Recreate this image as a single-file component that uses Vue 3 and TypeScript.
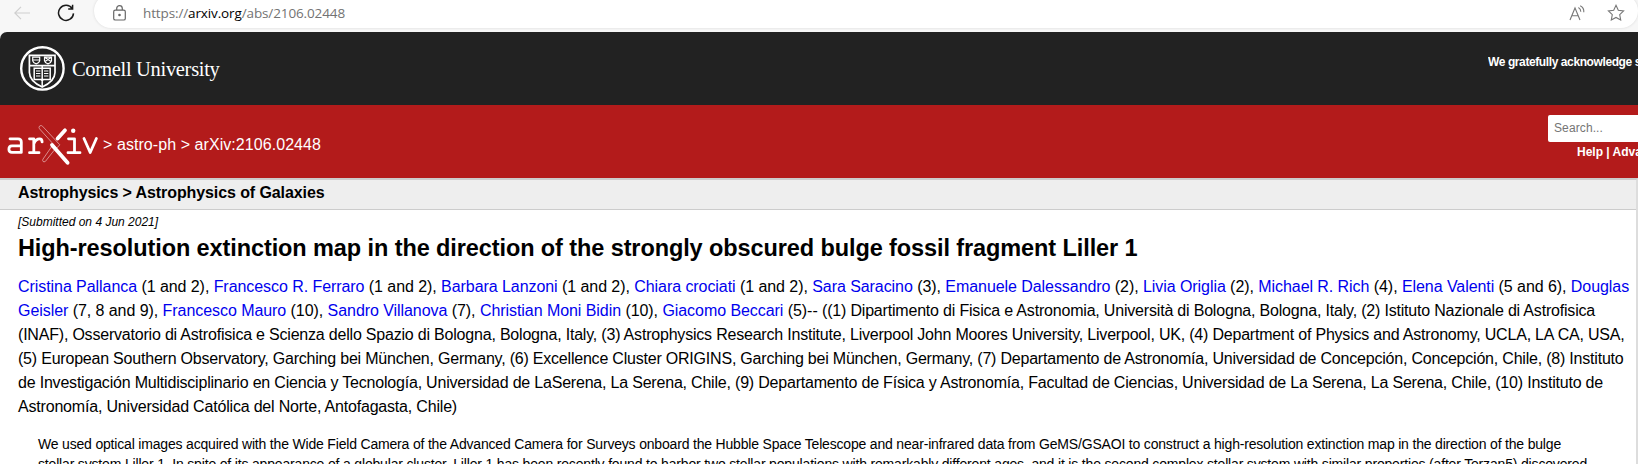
<script setup lang="ts">
interface Part {
  text: string
  link?: boolean
}
interface Run {
  parts: Part[]
  width: number
}

// Tracks a text so that it takes exactly the given width in pixels
const vFit = {
  mounted(el: HTMLElement, binding: { value: number }) {
    const count = (el.textContent ?? '').length
    const natural = el.getBoundingClientRect().width
    if (count > 0) el.style.letterSpacing = `${(binding.value - natural) / count}px`
  },
}

// "[Name]" marks a linked author
const run = (width: number, text: string): Run => ({
  width,
  parts: text
    .split(/(\[[^\]]+\])/)
    .filter(Boolean)
    .map((s) => (s.startsWith('[') ? { text: s.slice(1, -1), link: true } : { text: s })),
})

const authorLines: Run[][] = [
  [run(1611, '[Cristina Pallanca] (1 and 2), [Francesco R. Ferraro] (1 and 2), [Barbara Lanzoni] (1 and 2), [Chiara crociati] (1 and 2), [Sara Saracino] (3), [Emanuele Dalessandro] (2), [Livia Origlia] (2), [Michael R. Rich] (4), [Elena Valenti] (5 and 6), [Douglas]')],
  [
    run(804, '[Geisler] (7, 8 and 9), [Francesco Mauro] (10), [Sandro Villanova] (7), [Christian Moni Bidin] (10), [Giacomo Beccari] (5)-- '),
    run(773, '((1) Dipartimento di Fisica e Astronomia, Università di Bologna, Bologna, Italy, (2) Istituto Nazionale di Astrofisica'),
  ],
  [run(1606.5, '(INAF), Osservatorio di Astrofisica e Scienza dello Spazio di Bologna, Bologna, Italy, (3) Astrophysics Research Institute, Liverpool John Moores University, Liverpool, UK, (4) Department of Physics and Astronomy, UCLA, LA CA, USA,')],
  [run(1605.5, '(5) European Southern Observatory, Garching bei München, Germany, (6) Excellence Cluster ORIGINS, Garching bei München, Germany, (7) Departamento de Astronomía, Universidad de Concepción, Concepción, Chile, (8) Instituto')],
  [run(1585, 'de Investigación Multidisciplinario en Ciencia y Tecnología, Universidad de LaSerena, La Serena, Chile, (9) Departamento de Física y Astronomía, Facultad de Ciencias, Universidad de La Serena, La Serena, Chile, (10) Instituto de')],
  [run(439, 'Astronomía, Universidad Católica del Norte, Antofagasta, Chile)')],
]

const abstractLines: Run[] = [
  run(1523, 'We used optical images acquired with the Wide Field Camera of the Advanced Camera for Surveys onboard the Hubble Space Telescope and near-infrared data from GeMS/GSAOI to construct a high-resolution extinction map in the direction of the bulge'),
  run(1549, 'stellar system Liller 1. In spite of its appearance of a globular cluster, Liller 1 has been recently found to harbor two stellar populations with remarkably different ages, and it is the second complex stellar system with similar properties (after Terzan5) discovered'),
]
</script>

<template>
  <div class="window">
    <div class="toolbar">
      <svg class="back" width="16" height="14" viewBox="0 0 16 14"><path d="M16 7H1M7 .8.8 7 7 13.2" /></svg>
      <svg class="reload" width="18" height="18" viewBox="0 0 18 18"><path d="M15.2 4.6A7.5 7.5 0 1 0 16.5 9.4M15.6.8V5H11.2" /></svg>
      <div class="address">
        <svg class="lock" width="13" height="16" viewBox="0 0 13 16"><rect x=".7" y="5.2" width="11.6" height="9.8" rx="1.6" /><path d="M3.7 5V3.4a2.8 2.8 0 0 1 5.6 0V5" /><circle cx="6.5" cy="10" r=".7" /></svg>
        <span v-fit="202" class="url">https://<b>arxiv.org</b>/abs/2106.02448</span>
        <svg class="read" width="17" height="16" viewBox="0 0 17 16"><path d="M1 15 6 3l5 12M2.8 10.8h6.4M9.4 2.4q2.4 1.3 2.4 4.4M11.2.7q4 2 3.6 6.6" /></svg>
        <svg class="star" width="18" height="18" viewBox="0 0 18 18"><path d="m9 1.3 2.3 4.9 5.3.7-3.9 3.7 1 5.4L9 13.4 4.3 16l1-5.4L1.4 6.9l5.3-.7z" /></svg>
      </div>
    </div>

    <div class="page">
      <header class="cornell">
        <svg class="seal" width="46" height="46" viewBox="0 0 46 46">
          <circle cx="23.4" cy="23.4" r="21.2" stroke-width="2.4" />
          <path d="M10.4 10.4h25.6v17.2Q35.8 36.5 23.2 42 10.6 36.5 10.4 27.6zM10.4 20.6h25.6" stroke-width="1.7" />
          <path d="M13.7 12.2h7v3.6q-.6 2.3-3.5 3-2.9-.7-3.5-3zM25.5 12.2h7v3.6q-.6 2.3-3.5 3-2.9-.7-3.5-3zM14 15h6.5M26 12.5l6 4M32 12.5l-6 4" stroke-width="1.2" />
          <path d="M15.2 23.2h7l1 1 1-1h7v11.4h-7l-1 1-1-1h-7zM23.2 20.6v20.5" stroke-width="1.5" />
          <path d="M17 26h4.4M17 28.5h4.4M17 31h4.4M25 26h4.4M25 28.5h4.4M25 31h4.4" stroke-width="1.1" />
        </svg>
        <span v-fit="147.5" class="cornell-name">Cornell University</span>
        <div class="support"><span v-fit="153">We gratefully acknowledge s</span></div>
      </header>

      <div class="banner">
        <svg class="logo" width="92" height="42" viewBox="0 0 92 42">
          <g class="strokes">
            <path d="M3 13.8h8q3.3 0 3.3 3.2v10.4H4.9q-3 0-3-3.2 0-3.4 3-3.4h9.4" />
            <path d="M22.5 13.8h4.3v13.7M22.5 27.7h9.5M27 18.5q2-4.6 5.5-4.6 2.6 0 2.6 3" />
            <path d="M61.5 13.8h6v13.7M61 27.7h12" />
            <path d="m77 13.5 6.2 14 6.2-14" />
          </g>
          <path class="outline" d="M32.6 1q1.7-1.2 3 .3L52.8 19.8l-3 3.2L32.5 3.8q-1.1-1.5.1-2.8zM44.5 21.8l3.2 2.8-9.3 11.8q-1.6 1-2.4 0-.8-1.1 0-2.3z" />
          <path class="cross" d="M58 5.3 50.6 13.6M45 20 60.6 37.8" />
          <circle cx="66.2" cy="5.8" r="2.2" />
        </svg>
        <span v-fit="218" class="crumbs">&gt; <a>astro-ph</a> &gt; arXiv:2106.02448</span>
        <div class="search">
          <div class="field"><span v-fit="49">Search...</span></div>
          <div class="help">Help | Adva</div>
        </div>
      </div>

      <main class="content">
        <div class="subject"><span v-fit="306.5">Astrophysics &gt; Astrophysics of Galaxies</span></div>
        <div class="dateline">[Submitted on 4 Jun 2021]</div>
        <h1><span v-fit="1119.5">High-resolution extinction map in the direction of the strongly obscured bulge fossil fragment Liller 1</span></h1>
        <div class="authors">
          <div v-for="(line, i) in authorLines" :key="i" class="line">
            <span v-for="(r, k) in line" :key="k" v-fit="r.width"><template v-for="(part, j) in r.parts" :key="j"><a v-if="part.link">{{ part.text }}</a><span v-else>{{ part.text }}</span></template></span>
          </div>
        </div>
        <div class="abstract">
          <div v-for="(r, i) in abstractLines" :key="i" class="line">
            <span v-fit="r.width"><template v-for="(part, j) in r.parts" :key="j">{{ part.text }}</template></span>
          </div>
        </div>
      </main>
    </div>
  </div>
</template>

<style>
body {
  margin: 0;
  overflow: hidden;
}
</style>

<style scoped>
.window {
  width: 1638px;
  height: 464px;
  overflow: hidden;
  background: #f7f7f7;
  font-family: "Liberation Sans", Arial, sans-serif;
  color: #000;
  white-space: nowrap;
}
svg {
  display: block;
  flex: none;
  fill: none;
}
.toolbar {
  height: 32px;
  display: flex;
  align-items: flex-start;
  box-sizing: border-box;
  padding-left: 14px;
}
.back {
  margin-top: 6px;
  stroke: #cfcfcf;
  stroke-width: 1.2;
}
.reload {
  margin: 4px 0 0 27px;
  stroke: #1b1b1b;
  stroke-width: 1.5;
}
.address {
  width: 1545px;
  height: 34px;
  margin: -6px 0 0 19px;
  box-sizing: border-box;
  padding: 6px 13px 0 19px;
  display: flex;
  align-items: flex-start;
  background: #fff;
  border-radius: 17px;
  box-shadow: 0 0 3px rgba(0, 0, 0, 0.12);
}
.lock {
  margin-top: 5px;
  stroke: #666;
  stroke-width: 1.2;
}
.lock circle {
  fill: #666;
}
.url {
  margin: 3px auto 0 17px;
  font: 13.5px/20px "Open Sans", "Noto Sans", sans-serif;
  color: #737373;
}
.url b {
  font-weight: 400;
  color: #000;
}
.read {
  margin: 5px 21px 0 0;
  stroke: #777;
  stroke-width: 1.1;
}
.star {
  margin-top: 4px;
  stroke: #777;
  stroke-width: 1.1;
}
.page {
  height: 432px;
  border-top-left-radius: 7px;
  overflow: hidden;
  background: #fff;
}
.cornell {
  height: 73px;
  box-sizing: border-box;
  padding: 13px 0 0 19px;
  display: flex;
  align-items: flex-start;
  background: #222;
  color: #fff;
}
.seal {
  stroke: #fff;
}
.cornell-name {
  margin: 11px auto 0 7px;
  font: 20.5px/26px "Liberation Serif", "Times New Roman", serif;
}
.support {
  width: 150px;
  margin-top: 9px;
  overflow: hidden;
  font-size: 12px;
  line-height: 16px;
  font-weight: 700;
}
.banner {
  height: 73px;
  display: flex;
  align-items: flex-start;
  box-sizing: border-box;
  padding-left: 7px;
  background: #b31b1b;
  color: #fff;
}
.logo {
  margin-top: 20px;
}
.logo .strokes {
  stroke: #fff;
  stroke-width: 2.8;
  stroke-linejoin: round;
  stroke-linecap: round;
}
.logo .cross {
  stroke: #fff;
  stroke-width: 3.8;
  stroke-linecap: round;
}
.logo .outline {
  stroke: #e3a9a9;
  stroke-width: 0.8;
}
.logo circle {
  fill: #fff;
}
.crumbs {
  margin: 30px auto 0 4px;
  font-size: 16px;
  line-height: 20px;
}
.search {
  width: 90px;
  padding-top: 10px;
  overflow: hidden;
}
.field {
  width: 140px;
  height: 27px;
  box-sizing: border-box;
  padding-left: 6px;
  background: #fff;
  border-radius: 2px;
  color: #757575;
  font-size: 12px;
  line-height: 27px;
}
.help {
  margin: 2px 0 0 29px;
  font-size: 12px;
  line-height: 16px;
  font-weight: 700;
}
.content {
  width: 1636px;
  height: 284px;
  border-top: 2px solid #ccc;
  border-right: 2px solid #ddd;
}
.subject {
  height: 29px;
  padding-left: 18px;
  background: #eee;
  border-bottom: 1px solid #ccc;
  box-sizing: content-box;
  font-size: 16px;
  line-height: 25px;
  font-weight: 700;
}
.dateline {
  margin: 4px 0 0 18px;
  font-size: 12px;
  line-height: 16px;
  font-style: italic;
}
h1 {
  margin: 3px 0 0 18px;
  font-size: 23.5px;
  line-height: 30px;
  font-weight: 700;
}
.authors {
  margin: 12px 0 0 18px;
  font-size: 16px;
  line-height: 24px;
}
.authors .line {
  height: 24px;
}
.authors a {
  color: #0000ee;
}
.abstract {
  margin: 15px 0 0 38px;
  font-size: 14px;
  line-height: 20px;
}
</style>
